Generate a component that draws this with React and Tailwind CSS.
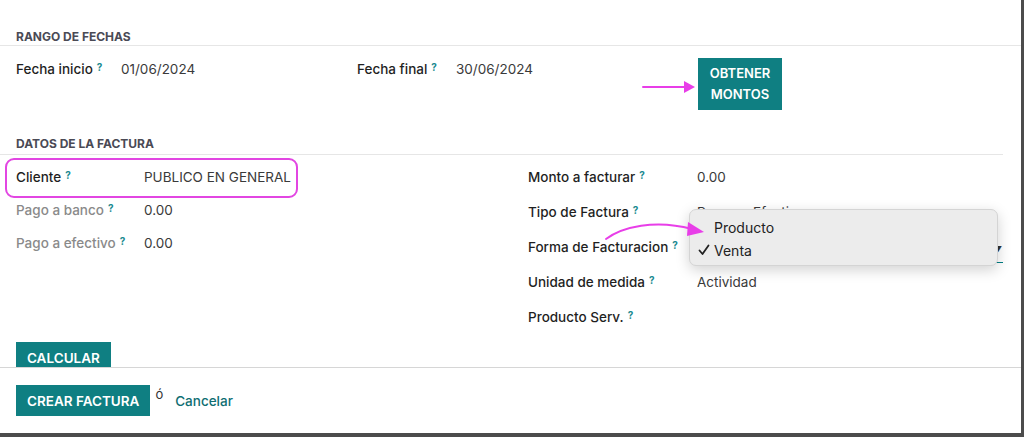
function Help() {
  return <sup className="ml-1 text-[10px] font-bold text-[#1a8a90] relative -top-[3px]">?</sup>;
}

function Field({ label, value, labelW, muted, rowH }) {
  return (
    <div className={`flex items-center ${rowH}`}>
      <div className={`${labelW} shrink-0 font-medium ${muted ? "text-[#8a8a8a]" : "text-[#1f1f1f]"}`}>
        {label}
        <Help />
      </div>
      <div className="text-[#3a3a3a]">{value}</div>
    </div>
  );
}

function Btn({ children, className = "" }) {
  return (
    <button className={`bg-[#0f7f82] text-white font-semibold text-[13.5px] leading-5 ${className}`}>{children}</button>
  );
}

export default function App() {
  return (
    <div
      className="relative w-[1024px] h-[437px] bg-white border-r-[3px] border-b-4 border-[#4c4c4c] overflow-hidden text-[13.5px]"
      style={{ fontFamily: "Inter, 'Noto Sans', sans-serif" }}
    >
      <div className="h-[367px] overflow-hidden">
        <div className="h-[46px] pt-[29px] px-4 border-b border-[#e6e6e6] text-[12px] leading-4 font-bold text-[#4a4a55]">
          RANGO DE FECHAS
        </div>
        <div className="flex items-start pt-3 pl-4">
          <div className="w-[341px] mt-px">
            <Field label="Fecha inicio" value="01/06/2024" labelW="w-[105px]" rowH="h-5" />
          </div>
          <div className="w-[341px] mt-px">
            <Field label="Fecha final" value="30/06/2024" labelW="w-[99px]" rowH="h-5" />
          </div>
          <Btn className="w-[84px] h-[52px] text-[13px] leading-[21px]">
            OBTENER
            <br />
            MONTOS
          </Btn>
        </div>

        <div className="mt-[26px] h-[19px] mr-[18px] px-4 border-b border-[#e6e6e6] text-[12px] leading-4 font-bold text-[#4a4a55]">
          DATOS DE LA FACTURA
        </div>

        <div className="flex">
          <div className="w-[528px] pl-4 pt-[6px]">
            <Field label="Cliente" value="PUBLICO EN GENERAL" labelW="w-[128px]" rowH="h-[33px]" />
            <Field label="Pago a banco" value="0.00" labelW="w-[128px]" rowH="h-[33px]" muted />
            <Field label="Pago a efectivo" value="0.00" labelW="w-[128px]" rowH="h-[33px]" muted />
          </div>
          <div className="flex-1 pt-[5px] pr-[18px]">
            <Field label="Monto a facturar" value="0.00" labelW="w-[169px]" rowH="h-[35px]" />
            <Field label="Tipo de Factura" value="Pago en Efectivo" labelW="w-[169px]" rowH="h-[35px]" />
            <div className="flex items-center h-[35px]">
              <div className="w-[169px] shrink-0 font-medium text-[#1f1f1f]">
                Forma de Facturacion
                <Help />
              </div>
              <div className="flex-1 h-[27px] mt-[3px] border-b-[1.5px] border-[#017e84] flex items-center justify-end">
                <span className="text-[8px] text-[#333] mr-[1px]">▼</span>
              </div>
            </div>
            <Field label="Unidad de medida" value="Actividad" labelW="w-[169px]" rowH="h-[35px]" />
            <Field label="Producto Serv." value="" labelW="w-[169px]" rowH="h-[35px]" />
          </div>
        </div>

        <div className="pl-4 mt-[7px]">
          <Btn className="h-[31px] px-[11px]">CALCULAR</Btn>
        </div>
      </div>

      <div className="border-t border-[#d6d6d6] pt-[17px] pl-4 flex items-start">
        <Btn className="h-[31px] px-[11px]">CREAR FACTURA</Btn>
        <span className="ml-[5px] mt-[1px] text-[#333] text-[13px] leading-4">ó</span>
        <span className="ml-[12px] mt-[6px] font-medium text-[#0f6e72]">Cancelar</span>
      </div>

      {/* highlight around Cliente */}
      <div className="absolute left-[5px] top-[158px] w-[293px] h-[40px] border-2 border-[#e246e2] rounded-[9px]" />

      {/* dropdown menu */}
      <div className="absolute left-[689px] top-[209px] w-[309px] h-[57px] bg-[#ececec] border border-[#d4d4d4] rounded-[7px] shadow-[0_4px_14px_rgba(0,0,0,0.18)] text-[#222] text-[14px]">
        <div className="flex items-center h-5 mt-[7px]">
          <span className="w-[24px]" />
          <span>Producto</span>
        </div>
        <div className="flex items-center h-5 mt-[3px]">
          <svg className="ml-[8px] mr-[4px]" width="12" height="12" viewBox="0 0 12 12">
            <path d="M1.5 6.5 L4.5 10 L10.5 1.5" fill="none" stroke="#222" strokeWidth="1.8" strokeLinecap="round" strokeLinejoin="round" />
          </svg>
          <span>Venta</span>
        </div>
      </div>

      {/* straight arrow */}
      <svg className="absolute left-[640px] top-[78px]" width="60" height="20" viewBox="0 0 60 20">
        <line x1="3" y1="9" x2="46" y2="9" stroke="#e83ee8" strokeWidth="2" strokeLinecap="round" />
        <path d="M44 3 L55 9 L44 15 Z" fill="#e83ee8" />
      </svg>

      {/* curved arrow */}
      <svg className="absolute left-[600px] top-[215px]" width="110" height="30" viewBox="0 0 110 30">
        <path d="M6 24 C 22 12, 55 4, 92 14" fill="none" stroke="#e83ee8" strokeWidth="2" strokeLinecap="round" />
        <path d="M88 7 L104 17 L87 21 Z" fill="#e83ee8" />
      </svg>
    </div>
  );
}
